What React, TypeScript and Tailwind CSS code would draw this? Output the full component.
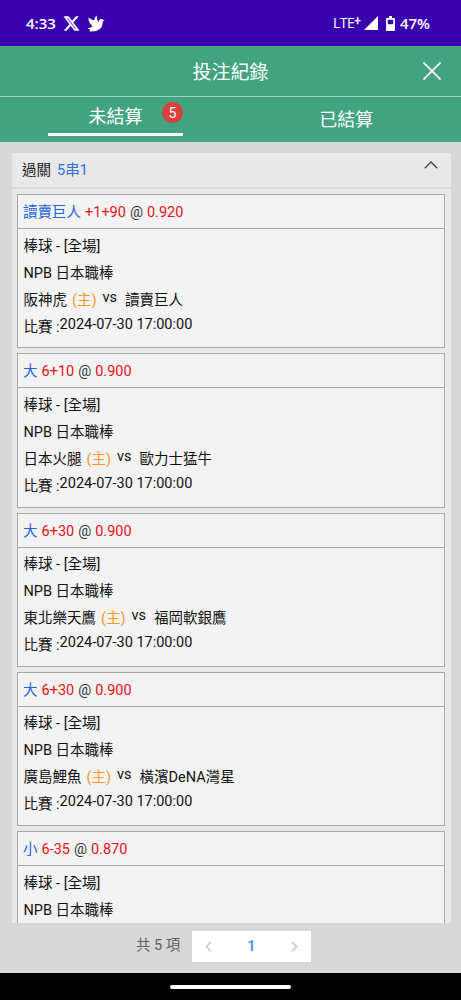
import { ChevronLeft, ChevronRight } from 'lucide-react'
import { FaXTwitter } from 'react-icons/fa6'

interface Bet {
  id: number
  pick: string
  line: string
  odds: string
  home?: string
  away?: string
}

const bets: Bet[] = [
  { id: 1, pick: '讀賣巨人', line: '+1+90', odds: '0.920', home: '阪神虎', away: '讀賣巨人' },
  { id: 2, pick: '大', line: '6+10', odds: '0.900', home: '日本火腿', away: '歐力士猛牛' },
  { id: 3, pick: '大', line: '6+30', odds: '0.900', home: '東北樂天鷹', away: '福岡軟銀鷹' },
  { id: 4, pick: '大', line: '6+30', odds: '0.900', home: '廣島鯉魚', away: '橫濱DeNA灣星' },
  { id: 5, pick: '小', line: '6-35', odds: '0.870' },
]

function StatusBar() {
  return (
    <div className="flex h-[46px] shrink-0 items-center justify-between bg-[#3a00b0] pl-[26px] pr-[31px] text-white">
      <div className="flex items-center">
        <span className="w-[37px] font-['Open_Sans'] text-[15px] font-semibold leading-5">4:33</span>
        <FaXTwitter className="h-[17px] w-[17px]" stroke="currentColor" strokeWidth={14} />
        <svg className="ml-[7px] h-[17px] w-[18px]" viewBox="0 0 18 17" fill="currentColor">
          <path d="M17.6 5.2 15.4 4.6C14.3 3.6 12.8 4.2 12.2 5.6L11.6 7C10.2 5.2 9.6 3 9.8.4 8.2 1.6 7.3 3.4 7.3 5.4 5.4 5 3.3 4 1.6 2.6 1.2 5.6 2.3 8.4 5 10.4L5.2 11.6C4 12.6 2.3 13.2.4 13.3L3 14.6 2.6 16.4C7 17 13.8 15.8 15.2 10.6 15.6 9 15.6 7.4 16 6.4z" />
        </svg>
      </div>
      <div className="flex items-center">
        <span className="font-['Open_Sans'] text-[14px] leading-5 tracking-[-0.5px]">LTE</span>
        <span className="-mt-1 text-[12px] font-medium leading-4">+</span>
        <svg className="ml-[3px] h-[14px] w-[14px]" viewBox="0 0 14 14" fill="currentColor">
          <path d="M14 0v14H0z" />
        </svg>
        <svg className="ml-[8px] h-[15px] w-[9px]" viewBox="0 0 9 15" fill="none">
          <path d="M3 0h3v2h2a1 1 0 0 1 1 1v11a1 1 0 0 1-1 1H1a1 1 0 0 1-1-1V3a1 1 0 0 1 1-1h2z" fill="currentColor" />
          <path d="M1.8 3.8h5.4v4.4H1.8z" fill="#3a00b0" />
        </svg>
        <span className="ml-[5px] font-['Open_Sans'] text-[15px] font-semibold leading-5">47%</span>
      </div>
    </div>
  )
}

function BetCard({ bet }: { bet: Bet }) {
  return (
    <div className="h-[154.3px] shrink-0 border border-[#a8a8a8] bg-[#f3f3f3]">
      {/* Selection and odds */}
      <div className="flex h-[34px] items-center gap-1 border-b border-[#a8a8a8] pl-[5px] pt-[2.6px] text-[#ec1016]">
        <span className="text-[#1c63dc]">{bet.pick}</span>
        <span>{bet.line}</span>
        <span className="text-[#333]">@</span>
        <span>{bet.odds}</span>
      </div>

      {/* Match info */}
      <div className="pl-[5.5px] pt-[3.5px] leading-[27px] text-[#111]">
        <div>棒球 - [全場]</div>
        <div>NPB 日本職棒</div>
        {bet.home && (
          <>
            <div className="flex">
              <span>{bet.home}</span>
              <span className="ml-[5px] text-[#f8982a]">(主)</span>
              <span className="-mt-[3px] ml-[6px]">vs</span>
              <span className="ml-[8px]">{bet.away}</span>
            </div>
            <div className="flex">
              <span>比賽 :</span>
              <span className="-mt-[3px]">2024-07-30 17:00:00</span>
            </div>
          </>
        )}
      </div>
    </div>
  )
}

export default function App() {
  return (
    <div className="flex h-[1000px] w-[461px] flex-col overflow-hidden bg-[#d8d8d8] font-[Roboto,'Noto_Sans_CJK_TC',sans-serif] text-[14.5px]">
      <StatusBar />

      {/* Title */}
      <div className="grid h-[51px] shrink-0 grid-cols-[1fr_auto_1fr] items-center border-b border-[#a5d3c1] bg-[#42a380] text-white">
        <h1 className="col-start-2 pt-[4px] text-[19px] leading-7">投注紀錄</h1>
        <button className="mr-5 justify-self-end" aria-label="關閉">
          <svg className="h-[18px] w-[18px]" viewBox="0 0 18 18" fill="none" stroke="currentColor" strokeWidth="1.7">
            <path d="M.5.5l17 17M17.5.5l-17 17" />
          </svg>
        </button>
      </div>

      {/* Tabs */}
      <div className="grid h-[45px] shrink-0 grid-cols-2 bg-[#42a380] text-[18px] text-white">
        <button className="relative mx-12 mb-[6px] h-[39px] w-[135px] border-b-[3px] border-white pt-[4px] leading-[32px]">
          未結算
          <span className="absolute right-0 top-[5px] flex h-[21px] w-[21px] items-center justify-center rounded-full bg-[#dc3d3d] text-[14px] leading-none">
            5
          </span>
        </button>
        <button className="pl-[1px]">已結算</button>
      </div>

      {/* Parlay panel */}
      <div className="ml-3 mr-[10px] mt-[11px] flex h-[770px] shrink-0 flex-col overflow-hidden bg-[#e9e9e9]">
        <div className="flex h-[36px] shrink-0 items-center border-b-2 border-[#dadada] pl-[10px] pr-[13px] pt-[1px] text-[#222]">
          <span>過關</span>
          <span className="ml-[6px] text-[#2f6fdc]">5串1</span>
          <svg className="-mt-[11px] ml-auto h-[8px] w-[14px]" viewBox="0 0 14 8" fill="none" stroke="#444" strokeWidth="1.3">
            <path d="M.8 7.2L7 1l6.2 6.2" />
          </svg>
        </div>
        <div className="flex flex-col gap-[5px] pl-[5px] pr-[6px] pt-[5px]">
          {bets.map((bet) => (
            <BetCard key={bet.id} bet={bet} />
          ))}
        </div>
      </div>

      {/* Pagination */}
      <div className="flex h-[50px] shrink-0 items-start pl-[136px] pt-[8px]">
        <span className="w-[56px] leading-[30px] text-[#606266]">共 5 項</span>
        <div className="flex h-[31px] w-[119px] items-center justify-between bg-white px-2">
          <ChevronLeft className="h-[17px] w-[17px] text-[#c0c4cc]" strokeWidth={2} />
          <span className="font-bold text-[#409eff]">1</span>
          <ChevronRight className="h-[17px] w-[17px] text-[#c0c4cc]" strokeWidth={2} />
        </div>
      </div>

      {/* Gesture bar */}
      <div className="flex flex-1 items-center justify-center bg-black">
        <div className="h-[4px] w-[121px] rounded-full bg-white" />
      </div>
    </div>
  )
}
